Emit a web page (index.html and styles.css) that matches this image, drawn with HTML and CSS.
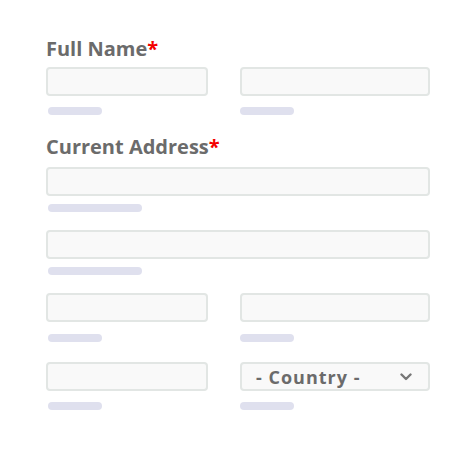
FILE: index.html
```html
<!DOCTYPE html>
<html lang="en">
<head>
<meta charset="utf-8">
<title>Form</title>
<link rel="stylesheet" href="styles.css">
</head>
<body>
<form class="form">
  <div class="label label--first">Full Name<span class="req">*</span></div>
  <div class="row row--first">
    <div class="field"><div class="input"></div><div class="hint hint--loose"></div></div>
    <div class="field"><div class="input"></div><div class="hint hint--loose hint--flush"></div></div>
  </div>

  <div class="label label--second">Current Address<span class="req">*</span></div>
  <div class="field field--first"><div class="input"></div><div class="hint hint--wide"></div></div>
  <div class="field field--next"><div class="input"></div><div class="hint hint--wide"></div></div>

  <div class="row row--third">
    <div class="field"><div class="input"></div><div class="hint hint--wider"></div></div>
    <div class="field"><div class="input"></div><div class="hint hint--wider hint--flush"></div></div>
  </div>

  <div class="row row--fourth">
    <div class="field"><div class="input"></div><div class="hint hint--loose"></div></div>
    <div class="field">
      <div class="input select">
        <span class="select-text">- Country -</span>
        <svg class="chevron" width="12" height="8" viewBox="0 0 12 8"><path d="M1.5 1.5 L6 6 L10.5 1.5" fill="none" stroke="#777" stroke-width="2.4" stroke-linecap="round" stroke-linejoin="round"/></svg>
      </div>
      <div class="hint hint--loose hint--flush"></div>
    </div>
  </div>
</form>
</body>
</html>
```

FILE: styles.css
```css
* { box-sizing: border-box; }
html, body { margin: 0; padding: 0; background: #fff; }
body { font-family: "Open Sans", "Liberation Sans", sans-serif; }

.form {
  width: 474px;
  padding: 37px 44px 0 46px;
}

.label {
  font-size: 20px;
  line-height: 24px;
  font-weight: 700;
  color: #6b6b6b;
}
.label--second { margin-top: 20px; }
.req { color: #f40000; }

.row {
  display: grid;
  grid-template-columns: 162px 190px;
  column-gap: 32px;
}
.row--first { margin-top: 6px; }
.row--third { margin-top: 18px; }
.row--fourth { margin-top: 20px; }

.field--first { margin-top: 8px; }
.field--next { margin-top: 18px; }

.input {
  height: 29px;
  border: 2px solid #e2e6e4;
  border-radius: 4px;
  background: #f9f9f9;
}

.hint {
  width: 54px;
  height: 8px;
  margin-left: 2px;
  margin-top: 8px;
  border-radius: 4px;
  background: #dfe0ee;
}
.hint--loose { margin-top: 11px; }
.hint--wider { margin-top: 12px; }
.hint--wide { width: 94px; }
.hint--flush { margin-left: 0; }

.select {
  display: flex;
  align-items: center;
  justify-content: space-between;
  padding: 0 16px 0 14px;
}
.select-text {
  font-size: 18px;
  font-weight: 700;
  color: #6b6b6b;
  line-height: 24px;
  letter-spacing: 1px;
  margin-top: 1px;
}
.chevron { display: block; margin-top: 1px; }
```
